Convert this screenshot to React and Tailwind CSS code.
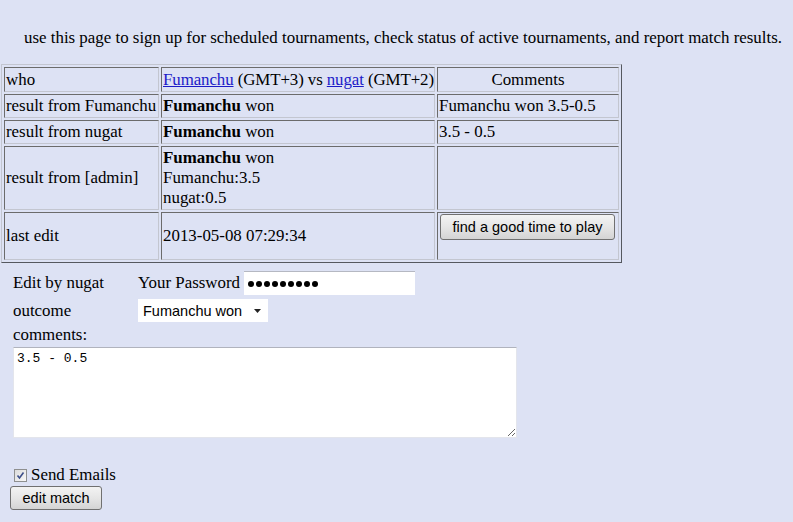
import React from 'react';

const cell = "border border-t-[#6b6b6b] border-l-[#6b6b6b] border-r-[#c3c6d0] border-b-[#c3c6d0] p-[1px] align-middle whitespace-nowrap";
const btn = "border border-[#707070] rounded-[3px] bg-linear-to-b from-[#f3f3f3] via-[#e6e6e6] to-[#d4d4d4] font-['Liberation_Sans',sans-serif] text-[14.5px] leading-none text-black";

const Link = ({ children }) => (
    <a href="#" className="text-[#1c1cc8] underline">{children}</a>
);

const App = () => {
    return (
        <div className="min-h-[522px] bg-[#dde2f4] font-['Liberation_Serif',serif] text-[16.9px] leading-[20px] text-black">
            <p className="pt-[28px] pl-[24px] whitespace-nowrap">
                use this page to sign up for scheduled tournaments, check status of active tournaments, and report match results.
            </p>

            {/* match table */}
            <table className="mt-[16px] ml-[1px] w-[621px] table-fixed border-separate border-spacing-[2px] border border-t-[#c3c6d0] border-l-[#c3c6d0] border-r-[#55585f] border-b-[#55585f]">
                <tbody>
                    <tr className="h-[25px]">
                        <td className={`${cell} w-[155px]`}>who</td>
                        <td className={`${cell} w-[274px] tracking-[-0.1px]`}>
                            <Link>Fumanchu</Link> (GMT+3) vs <Link>nugat</Link> (GMT+2)
                        </td>
                        <td className={`${cell} w-[182px] text-center`}>Comments</td>
                    </tr>
                    <tr className="h-[24px]">
                        <td className={cell}>result from Fumanchu</td>
                        <td className={cell}><b>Fumanchu</b> won</td>
                        <td className={cell}>Fumanchu won 3.5-0.5</td>
                    </tr>
                    <tr className="h-[24px]">
                        <td className={cell}>result from nugat</td>
                        <td className={cell}><b>Fumanchu</b> won</td>
                        <td className={cell}>3.5 - 0.5</td>
                    </tr>
                    <tr className="h-[64px]">
                        <td className={cell}>result from [admin]</td>
                        <td className={cell}>
                            <b>Fumanchu</b> won<br />Fumanchu:3.5<br />nugat:0.5
                        </td>
                        <td className={cell}></td>
                    </tr>
                    <tr className="h-[48px]">
                        <td className={cell}>last edit</td>
                        <td className={cell}>2013-05-08 07:29:34</td>
                        <td className={`${cell} !align-top`}>
                            <button className={`${btn} ml-[1px] w-[175px] h-[26px]`}>find a good time to play</button>
                        </td>
                    </tr>
                </tbody>
            </table>

            {/* edit form */}
            <div className="pl-[13px]">
                <div className="mt-[8px] flex items-center h-[24px]">
                    <span className="w-[125px]">Edit by nugat</span>
                    <span>Your Password</span>
                    <div className="ml-[4px] w-[171px] h-[24px] bg-white border-t border-t-[#b5b8c2] flex items-center gap-[2px] pl-[4px]">
                        {Array.from({ length: 9 }).map((_, i) => (
                            <span key={i} className="w-[6px] h-[6px] rounded-full bg-black" />
                        ))}
                    </div>
                </div>
                <div className="mt-[4px] flex items-center h-[23px]">
                    <span className="w-[125px]">outcome</span>
                    <div className="w-[130px] h-[23px] bg-white flex items-center justify-between pl-[5px] pr-[7px] font-['Liberation_Sans',sans-serif] text-[14.5px]">
                        <span>Fumanchu won</span>
                        <svg width="7" height="4" viewBox="0 0 7 4"><path d="M0 0h7L3.5 4z" fill="#222" /></svg>
                    </div>
                </div>
                <div className="mt-[3px] h-[20px]">comments:</div>
                <textarea
                    readOnly
                    defaultValue="3.5 - 0.5"
                    className="mt-[2px] block w-[504px] h-[91px] bg-white border border-[#e3e5ec] border-t-[#b0b3bd] pt-[3px] pl-[3px] font-['Liberation_Mono',monospace] text-[13px] leading-[16px] outline-none"
                />
                <div className="mt-[27px] flex items-center h-[20px]">
                    <span className="ml-[1px] w-[13px] h-[13px] border border-[#8e8f8f] bg-linear-to-br from-[#dcdcdc] to-[#f8f8f8] flex items-center justify-center">
                        <svg width="9" height="9" viewBox="0 0 9 9">
                            <path d="M1.5 4.5 L3.5 7 L7.5 1.5" fill="none" stroke="#3d4f8a" strokeWidth="1.6" />
                        </svg>
                    </span>
                    <span className="ml-[4px]">Send Emails</span>
                </div>
            </div>
            <button className={`${btn} mt-[1px] ml-[10px] w-[92px] h-[24px]`}>edit match</button>
        </div>
    );
};

export default App;
